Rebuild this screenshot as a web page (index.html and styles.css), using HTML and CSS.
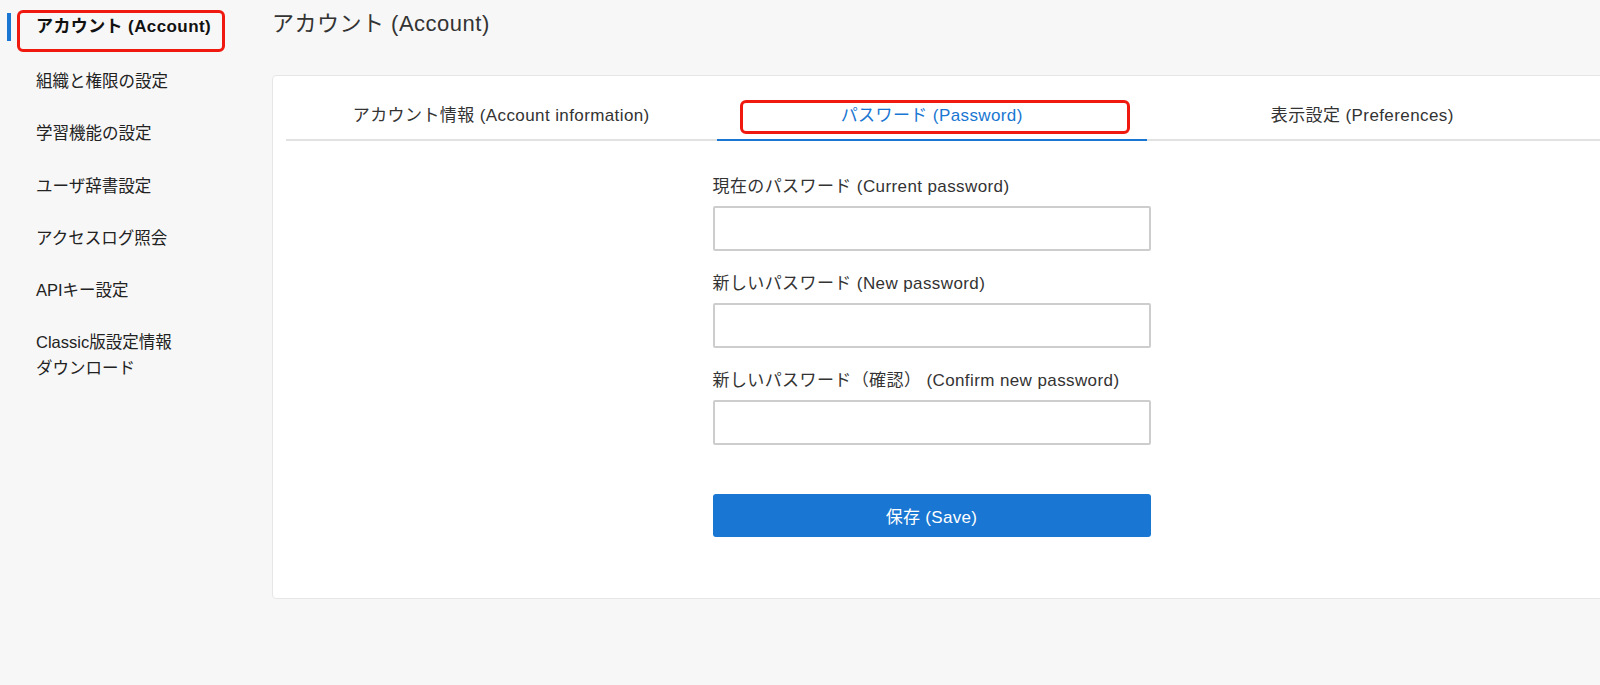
FILE: index.html
```html
<!DOCTYPE html>
<html lang="ja">
  <head>
    <meta charset="UTF-8" />
    <meta name="viewport" content="width=device-width, initial-scale=1.0" />
    <title>アカウント (Account)</title>
    <link rel="stylesheet" href="styles.css">
  </head>
  <body>
    <div class="layout">
      <!-- Sidebar -->
      <ul class="sidebar">
        <li class="nav-item active">アカウント (Account)</li>
        <li class="nav-item">組織と権限の設定</li>
        <li class="nav-item">学習機能の設定</li>
        <li class="nav-item">ユーザ辞書設定</li>
        <li class="nav-item">アクセスログ照会</li>
        <li class="nav-item">APIキー設定</li>
        <li class="nav-item">Classic版設定情報<br />ダウンロード</li>
      </ul>

      <div class="main">
        <h1 class="page-title">アカウント (Account)</h1>

        <div class="card">
          <div class="tabs">
            <div class="tab">アカウント情報 (Account information)</div>
            <div class="tab active">パスワード (Password)</div>
            <div class="tab">表示設定 (Preferences)</div>
          </div>

          <div class="panel">
            <form class="password-form" onsubmit="return false;">
              <label for="currentPassword">現在のパスワード (Current password)</label>
              <input type="password" id="currentPassword" />

              <label for="newPassword">新しいパスワード (New password)</label>
              <input type="password" id="newPassword" />

              <label for="confirmPassword">新しいパスワード（確認） (Confirm new password)</label>
              <input type="password" id="confirmPassword" />

              <button type="submit" class="btn-save">保存 (Save)</button>
            </form>
          </div>
        </div>
      </div>
    </div>
  </body>
</html>
```

FILE: styles.css
```css
body {
  margin: 0;
  font-family: "Liberation Sans", "Noto Sans CJK JP", sans-serif;
  background-color: #f7f7f7;
  color: #333;
  overflow: hidden;
}
.layout {
  display: flex;
  align-items: flex-start;
}
.sidebar {
  list-style: none;
  margin: 0;
  padding: 3px 0 0 0;
  width: 260px;
  flex-shrink: 0;
}
.nav-item {
  position: relative;
  padding: 13px 0 13.2px 36px;
  font-size: 16.5px;
  line-height: 26px;
  color: #222;
}
.nav-item.active {
  font-weight: bold;
  font-size: 17px;
  letter-spacing: 0.4px;
  color: #111;
  padding-top: 11px;
  padding-bottom: 15.2px;
}
.nav-item.active::before {
  content: "";
  position: absolute;
  left: 7px;
  top: 10px;
  width: 4px;
  height: 28px;
  background-color: #1976d2;
}
.nav-item.active::after {
  content: "";
  position: absolute;
  left: 17px;
  top: 7px;
  width: 208px;
  height: 42px;
  box-sizing: border-box;
  border: 3px solid #f0190f;
  border-radius: 6px;
}
.main {
  padding-left: 12px;
  flex: 1;
}
.page-title {
  margin: 10px 0 0 0;
  font-size: 22px;
  line-height: 28px;
  letter-spacing: 0.5px;
  font-weight: normal;
  color: #333;
}
.card {
  margin-top: 37px;
  width: 1360px;
  background-color: #fff;
  border: 1px solid #e6e6e6;
  border-radius: 4px;
  padding: 0 13px 61px 13px;
}
.tabs {
  display: flex;
  margin-top: 24px;
  border-bottom: 2px solid #e2e2e2;
}
.tab {
  position: relative;
  width: 430.5px;
  flex-shrink: 0;
  text-align: center;
  padding: 4px 0 11px 0;
  font-size: 17px;
  line-height: 24px;
  letter-spacing: 0.4px;
  color: #333;
}
.tab.active {
  color: #1976d2;
  border-bottom: 2px solid #1976d2;
  margin-bottom: -2px;
}
.tab.active::after {
  content: "";
  position: absolute;
  left: 23px;
  right: 17px;
  top: 0;
  height: 34px;
  box-sizing: border-box;
  border: 3px solid #f0190f;
  border-radius: 6px;
}
.panel {
  width: 1291px;
}
.password-form {
  width: 438px;
  margin: 0 auto;
  padding-top: 35px;
  display: flex;
  flex-direction: column;
}
.password-form label {
  font-size: 17px;
  line-height: 22px;
  letter-spacing: 0.4px;
  color: #333;
  margin-bottom: 8px;
}
.password-form input {
  height: 45px;
  box-sizing: border-box;
  border: 2px solid #cdcdcd;
  border-radius: 2px;
  margin: 0 0 22px 0;
  padding: 0 10px;
  font-size: 16px;
  background-color: #fff;
}
.password-form input:last-of-type {
  margin-bottom: 49px;
}
.btn-save {
  height: 43px;
  border: none;
  border-radius: 3px;
  background-color: #1976d2;
  color: #fff;
  font-family: inherit;
  font-size: 17px;
  letter-spacing: 0.3px;
  cursor: pointer;
}
```
